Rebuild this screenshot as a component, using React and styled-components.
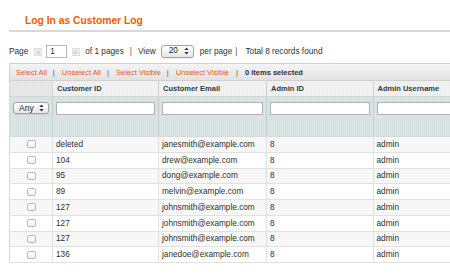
import React from "react";
import styled, { createGlobalStyle } from "styled-components";

const GlobalStyle = createGlobalStyle`
  html, body { margin: 0; padding: 0; background: #fff; overflow: hidden; }
  body { font-family: "Liberation Sans", Arial, Helvetica, sans-serif; color: #2f2f2f; }
  * { box-sizing: border-box; }
`;

const Page = styled.div`
  width: 450px;
  height: 277px;
  padding-left: 9px;
  overflow: hidden;
`;

const TitleBar = styled.div`
  height: 32px;
  padding: 15px 0 0 16px;
  border-bottom: 2px solid #d9d9d9;
`;

const Title = styled.h3`
  margin: 0;
  font-size: 10.3px;
  line-height: 12px;
  font-weight: bold;
  color: #eb5e00;
`;

const Pager = styled.div`
  display: flex;
  align-items: center;
  height: 14px;
  margin-top: 12px;
  font-size: 8.25px;
  white-space: nowrap;
`;

const ArrowBtn = styled.span`
  display: inline-flex;
  align-items: center;
  justify-content: center;
  width: 8px;
  height: 8px;
  margin-left: ${(p) => p.$ml}px;
  margin-top: 2px;
  background: #ececec;
  border: 1px solid #e0e0e0;
`;

const PageInput = styled.span`
  display: inline-flex;
  align-items: center;
  width: 21px;
  height: 13px;
  margin-left: 4px;
  padding-left: 3px;
  border: 1px solid #b8b8b8;
  background: #fff;
  font-size: 8.25px;
`;

const Text = styled.span`
  margin-left: ${(p) => p.$ml || 0}px;
`;

const Sep = styled.span`
  padding: 0 ${(p) => p.$r || 6}px 0 ${(p) => p.$l || 6}px;
  color: #555;
`;

const SelectBox = styled.span`
  display: inline-flex;
  align-items: center;
  justify-content: space-between;
  width: ${(p) => p.$w}px;
  height: ${(p) => p.$h}px;
  margin-left: ${(p) => p.$ml || 0}px;
  padding: 0 4px 0 ${(p) => p.$pl || 6}px;
  border: 1px solid #a3a3a3;
  border-radius: 3px;
  background: linear-gradient(#ffffff, #e6e6e6);
  box-shadow: 0 1px 1px rgba(0, 0, 0, 0.08);
  font-size: ${(p) => p.$fs || 8.25}px;
  line-height: 1;
  color: #222;
`;

const MassBar = styled.div`
  display: flex;
  align-items: center;
  height: 18px;
  margin-top: 5px;
  padding-left: 6px;
  border: 1px solid #d0d0d0;
  border-right: none;
  background: linear-gradient(#f5f5f5, #e2e2e2);
  font-size: 7.5px;
  white-space: nowrap;
`;

const MassLink = styled.span`
  color: #eb5e00;
`;

const Strong = styled.span`
  font-weight: bold;
  color: #2f2f2f;
`;

const Grid = styled.div`
  width: 480px;
  border-left: 1px solid #d6d9d9;
`;

const Row = styled.div`
  display: grid;
  grid-template-columns: 42px 106px 108px 106.5px 110px;
  height: ${(p) => p.$h}px;
  background: ${(p) => p.$bg};
  border-bottom: 1px solid ${(p) => p.$line || "#dfe2e2"};
`;

const HeadCell = styled.div`
  display: flex;
  align-items: center;
  padding-left: 4px;
  border-left: ${(p) => (p.$first ? "none" : "1px solid #d2d2d2")};
  background: ${(p) =>
    p.$first
      ? "repeating-linear-gradient(90deg, #e4e4e4 0 1px, #e9e9e9 1px 2px)"
      : "repeating-linear-gradient(90deg, #eeeeee 0 1px, #f2f2f2 1px 2px)"};
  font-size: 7.5px;
  font-weight: bold;
  color: #2d3b40;
`;

const FilterCell = styled.div`
  display: flex;
  flex-direction: column;
  align-items: ${(p) => (p.$first ? "flex-start" : "stretch")};
  padding: 5px 3px 0 3px;
  border-left: ${(p) => (p.$first ? "none" : "1px solid #c6d0d0")};
  background: repeating-linear-gradient(90deg, #d6e2e2 0 1px, #dae5e5 1px 2px);
`;

const FilterInput = styled.div`
  height: 13px;
  background: #fff;
  border: 1px solid #b3b3b3;
`;

const Cell = styled.div`
  display: flex;
  align-items: center;
  justify-content: ${(p) => (p.$center ? "center" : "flex-start")};
  padding-left: ${(p) => (p.$center ? 1 : 3)}px;
  border-left: ${(p) => (p.$first ? "none" : "1px solid #dfe2e2")};
  font-size: 8.25px;
  color: #2f2f2f;
  white-space: nowrap;
  overflow: hidden;
`;

const Check = styled.span`
  width: 9px;
  height: 8px;
  border: 1px solid #b9b9b9;
  border-radius: 2px;
  background: linear-gradient(#ffffff, #f0f0f0);
`;

const UpDown = () => (
  <svg width="5" height="8" viewBox="0 0 5 8">
    <path d="M2.5 0.5 L4.6 3 L0.4 3 Z" fill="#333" />
    <path d="M2.5 7.5 L4.6 5 L0.4 5 Z" fill="#333" />
  </svg>
);

const Tri = ({ dir }) => (
  <svg width="4" height="5" viewBox="0 0 4 5">
    {dir === "left" ? (
      <path d="M3.5 0.5 L0.5 2.5 L3.5 4.5 Z" fill="#c9c9c9" />
    ) : (
      <path d="M0.5 0.5 L3.5 2.5 L0.5 4.5 Z" fill="#c9c9c9" />
    )}
  </svg>
);

const rows = [
  ["deleted", "janesmith@example.com"],
  ["104", "drew@example.com"],
  ["95", "dong@example.com"],
  ["89", "melvin@example.com"],
  ["127", "johnsmith@example.com"],
  ["127", "johnsmith@example.com"],
  ["127", "johnsmith@example.com"],
  ["136", "janedoe@example.com"],
];

export default function App() {
  return (
    <>
      <GlobalStyle />
      <Page>
        <TitleBar>
          <Title>Log In as Customer Log</Title>
        </TitleBar>

        <Pager>
          <Text>Page</Text>
          <ArrowBtn $ml={6}>
            <Tri dir="left" />
          </ArrowBtn>
          <PageInput>1</PageInput>
          <ArrowBtn $ml={5}>
            <Tri dir="right" />
          </ArrowBtn>
          <Text $ml={5}>of 1 pages</Text>
          <Sep>|</Sep>
          <Text>View</Text>
          <SelectBox $w={33} $h={13} $ml={5} $pl={7}>
            20
            <UpDown />
          </SelectBox>
          <Text $ml={6}>per page</Text>
          <Sep $l={3} $r={8}>|</Sep>
          <Text>Total 8 records found</Text>
        </Pager>

        <MassBar>
          <MassLink>Select All</MassLink>
          <Sep $l={6} $r={7}>|</Sep>
          <MassLink>Unselect All</MassLink>
          <Sep $l={6} $r={7}>|</Sep>
          <MassLink>Select Visible</MassLink>
          <Sep $l={6} $r={7}>|</Sep>
          <MassLink>Unselect Visible</MassLink>
          <Sep $l={7} $r={7}>|</Sep>
          <Strong>0 items selected</Strong>
        </MassBar>

        <Grid>
          <Row $h={16} $line="#d0d6d6">
            <HeadCell $first />
            <HeadCell>Customer ID</HeadCell>
            <HeadCell>Customer Email</HeadCell>
            <HeadCell>Admin ID</HeadCell>
            <HeadCell>Admin Username</HeadCell>
          </Row>
          <Row $h={40} $line="#d6dada">
            <FilterCell $first>
              <SelectBox $w={36} $h={12} $pl={5} $fs={8.5}>
                Any
                <UpDown />
              </SelectBox>
            </FilterCell>
            <FilterCell>
              <FilterInput />
            </FilterCell>
            <FilterCell>
              <FilterInput />
            </FilterCell>
            <FilterCell>
              <FilterInput />
            </FilterCell>
            <FilterCell>
              <FilterInput />
            </FilterCell>
          </Row>
          {rows.map(([id, email], i) => (
            <Row key={i} $h={15.75} $bg={i % 2 === 0 ? "#f7f7f7" : "#ffffff"}>
              <Cell $first $center>
                <Check />
              </Cell>
              <Cell>{id}</Cell>
              <Cell>{email}</Cell>
              <Cell>8</Cell>
              <Cell>admin</Cell>
            </Row>
          ))}
        </Grid>
      </Page>
    </>
  );
}
